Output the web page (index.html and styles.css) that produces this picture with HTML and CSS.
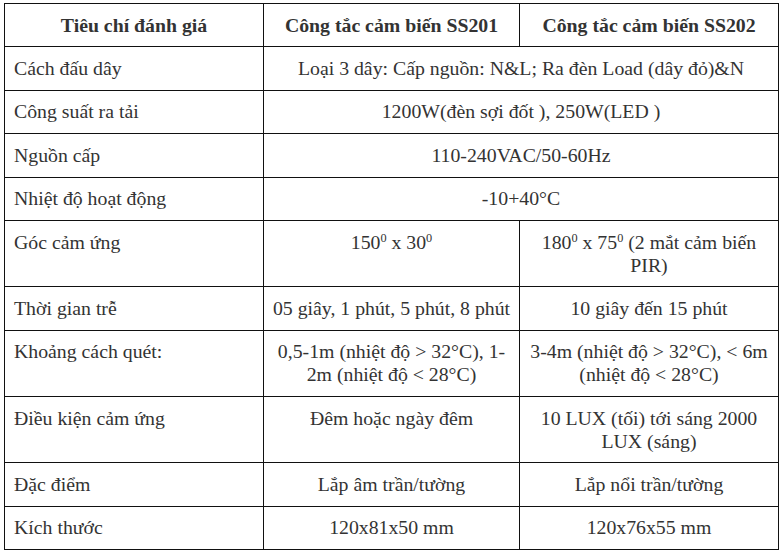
FILE: index.html
```html
<!DOCTYPE html>
<html lang="vi">
<head>
<meta charset="utf-8">
<title>So sánh công tắc cảm biến</title>
<link rel="stylesheet" href="styles.css">
</head>
<body>
<table class="spec">
  <colgroup>
    <col class="c1"><col class="c2"><col class="c3">
  </colgroup>
  <thead>
    <tr>
      <th>Tiêu chí đánh giá</th>
      <th>Công tắc cảm biến SS201</th>
      <th>Công tắc cảm biến SS202</th>
    </tr>
  </thead>
  <tbody>
    <tr>
      <td class="label">Cách đấu dây</td>
      <td colspan="2">Loại 3 dây: Cấp nguồn: N&amp;L; Ra đèn Load (dây đỏ)&amp;N</td>
    </tr>
    <tr>
      <td class="label">Công suất ra tải</td>
      <td colspan="2">1200W(đèn sợi đốt ), 250W(LED )</td>
    </tr>
    <tr>
      <td class="label">Nguồn cấp</td>
      <td colspan="2">110-240VAC/50-60Hz</td>
    </tr>
    <tr>
      <td class="label">Nhiệt độ hoạt động</td>
      <td colspan="2">-10+40°C</td>
    </tr>
    <tr>
      <td class="label">Góc cảm ứng</td>
      <td>150<sup>0</sup> x 30<sup>0</sup></td>
      <td>180<sup>0</sup> x 75<sup>0</sup> (2 mắt cảm biến<br>PIR)</td>
    </tr>
    <tr>
      <td class="label">Thời gian trễ</td>
      <td>05 giây, 1 phút, 5 phút, 8 phút</td>
      <td>10 giây đến 15 phút</td>
    </tr>
    <tr>
      <td class="label">Khoảng cách quét:</td>
      <td>0,5-1m (nhiệt độ &gt; 32°C), 1-<br>2m (nhiệt độ &lt; 28°C)</td>
      <td>3-4m (nhiệt độ &gt; 32°C), &lt; 6m<br>(nhiệt độ &lt; 28°C)</td>
    </tr>
    <tr>
      <td class="label">Điều kiện cảm ứng</td>
      <td>Đêm hoặc ngày đêm</td>
      <td>10 LUX (tối) tới sáng 2000<br>LUX (sáng)</td>
    </tr>
    <tr>
      <td class="label">Đặc điểm</td>
      <td>Lắp âm trần/tường</td>
      <td>Lắp nổi trần/tường</td>
    </tr>
    <tr>
      <td class="label">Kích thước</td>
      <td>120x81x50 mm</td>
      <td>120x76x55 mm</td>
    </tr>
  </tbody>
</table>
</body>
</html>
```

FILE: styles.css
```css
html, body {
  margin: 0;
  padding: 0;
  background: #ffffff;
}

body {
  padding: 3px 0 0 4px;
  font-family: "Liberation Serif", "Times New Roman", serif;
  font-size: 19.8px;
  line-height: 23px;
  color: #333333;
}

.spec {
  border-collapse: collapse;
  table-layout: fixed;
  width: 774px;
}

.c1 { width: 259px; }
.c2 { width: 256px; }
.c3 { width: 259px; }

.spec th,
.spec td {
  border: 1px solid #111111;
  padding: 9.7px 6px;
  text-align: center;
  vertical-align: top;
  white-space: nowrap;
}

.spec th {
  font-weight: bold;
}

.spec td.label {
  text-align: left;
  padding-left: 9px;
}

sup {
  font-size: 0.62em;
  line-height: 0;
  vertical-align: 0.55em;
}
```
